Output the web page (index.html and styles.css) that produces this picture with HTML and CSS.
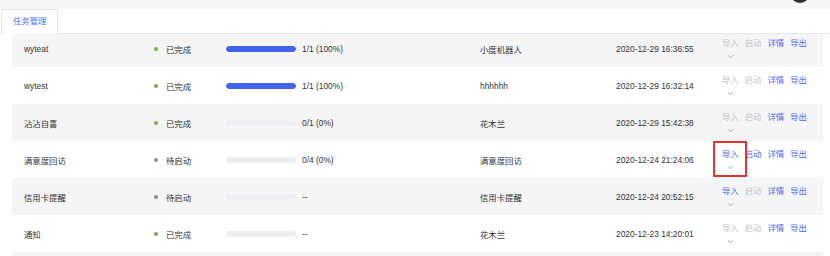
FILE: index.html
```html
<!DOCTYPE html>
<html lang="zh">
<head>
<meta charset="utf-8">
<link rel="stylesheet" href="styles.css">
</head>
<body>
<div class="topbar"><span class="avatar"></span></div>
<div class="page">
  <div class="tabs">
    <div class="tab">任务管理</div>
    <div class="tab-rest"></div>
  </div>
  <div class="scroll">
    <div class="table">
      <div class="row">
        <div class="c-name">wyteat</div>
        <div class="c-status"><span class="dot done"></span>已完成</div>
        <div class="c-bar"><div class="bar"><div class="fill" style="width:100%"></div></div></div>
        <div class="c-prog">1/1 (100%)</div>
        <div class="c-owner">小度机器人</div>
        <div class="c-date">2020-12-29 16:36:55</div>
        <div class="c-act"><div class="imp"><span class="off">导入</span><svg class="chev" viewBox="0 0 8 5"><path d="M1 1l3 3 3-3"/></svg></div><span class="off">启动</span><span class="on">详情</span><span class="on">导出</span></div>
      </div>
      <div class="row">
        <div class="c-name">wytest</div>
        <div class="c-status"><span class="dot done"></span>已完成</div>
        <div class="c-bar"><div class="bar"><div class="fill" style="width:100%"></div></div></div>
        <div class="c-prog">1/1 (100%)</div>
        <div class="c-owner">hhhhhh</div>
        <div class="c-date">2020-12-29 16:32:14</div>
        <div class="c-act"><div class="imp"><span class="off">导入</span><svg class="chev" viewBox="0 0 8 5"><path d="M1 1l3 3 3-3"/></svg></div><span class="off">启动</span><span class="on">详情</span><span class="on">导出</span></div>
      </div>
      <div class="row">
        <div class="c-name">沾沾自喜</div>
        <div class="c-status"><span class="dot done"></span>已完成</div>
        <div class="c-bar"><div class="bar"></div></div>
        <div class="c-prog">0/1 (0%)</div>
        <div class="c-owner">花木兰</div>
        <div class="c-date">2020-12-29 15:42:38</div>
        <div class="c-act"><div class="imp"><span class="off">导入</span><svg class="chev" viewBox="0 0 8 5"><path d="M1 1l3 3 3-3"/></svg></div><span class="off">启动</span><span class="on">详情</span><span class="on">导出</span></div>
      </div>
      <div class="row">
        <div class="c-name">满意度回访</div>
        <div class="c-status"><span class="dot wait"></span>待启动</div>
        <div class="c-bar"><div class="bar"></div></div>
        <div class="c-prog">0/4 (0%)</div>
        <div class="c-owner">满意度回访</div>
        <div class="c-date">2020-12-24 21:24:06</div>
        <div class="c-act"><div class="imp marked"><span class="on">导入</span><svg class="chev" viewBox="0 0 8 5"><path d="M1 1l3 3 3-3"/></svg></div><span class="on">启动</span><span class="on">详情</span><span class="on">导出</span></div>
      </div>
      <div class="row">
        <div class="c-name">信用卡提醒</div>
        <div class="c-status"><span class="dot wait"></span>待启动</div>
        <div class="c-bar"><div class="bar"></div></div>
        <div class="c-prog">--</div>
        <div class="c-owner">信用卡提醒</div>
        <div class="c-date">2020-12-24 20:52:15</div>
        <div class="c-act"><div class="imp"><span class="on">导入</span><svg class="chev" viewBox="0 0 8 5"><path d="M1 1l3 3 3-3"/></svg></div><span class="off">启动</span><span class="on">详情</span><span class="on">导出</span></div>
      </div>
      <div class="row">
        <div class="c-name">通知</div>
        <div class="c-status"><span class="dot done"></span>已完成</div>
        <div class="c-bar"><div class="bar"></div></div>
        <div class="c-prog">--</div>
        <div class="c-owner">花木兰</div>
        <div class="c-date">2020-12-23 14:20:01</div>
        <div class="c-act"><div class="imp"><span class="off">导入</span><svg class="chev" viewBox="0 0 8 5"><path d="M1 1l3 3 3-3"/></svg></div><span class="off">启动</span><span class="on">详情</span><span class="on">导出</span></div>
      </div>
      <div class="row"></div>
    </div>
  </div>
</div>
</body>
</html>
```

FILE: styles.css
```css
* { box-sizing: border-box; }
html, body { margin: 0; padding: 0; }
body {
  width: 830px;
  height: 256px;
  overflow: hidden;
  background: #fff;
  font-family: "Liberation Sans", "Noto Sans CJK SC", sans-serif;
  font-size: 8.4px;
  color: #333;
  position: relative;
}
.topbar {
  height: 9px;
  background: #f7f7f8;
  position: relative;
  overflow: hidden;
}
.avatar {
  position: absolute;
  left: 790px;
  top: -17px;
  width: 20px;
  height: 20px;
  border-radius: 50%;
  background: #2b2b2b;
}
.page { background: #fff; }
.tabs {
  display: flex;
  height: 25px;
}
.tab {
  margin-left: 1px;
  width: 57px;
  height: 25px;
  border: 1px solid #e2e3e6;
  border-bottom: none;
  border-radius: 3px 3px 0 0;
  color: #4a6cf5;
  font-size: 8.4px;
  padding-left: 11px;
  line-height: 23px;
}
.tab-rest {
  flex: 1;
  border-bottom: 1px solid #e6e7ea;
}
.scroll {
  height: 222px;
  overflow: hidden;
}
.table {
  margin: -4px 7px 0 12px;
}
.row {
  height: 37px;
  display: grid;
  grid-template-columns: 130px 72px 76px 178px 136px 106px 1fr;
  align-items: center;
  padding-left: 12px;
}
.row:nth-child(odd) { background: #f5f5f6; }
.c-status { display: flex; align-items: center; }
.dot {
  width: 4px;
  height: 4px;
  border-radius: 50%;
  margin-right: 8px;
}
.dot.done { background: #6db33f; }
.dot.wait { background: #8b8f98; }
.bar {
  width: 70px;
  height: 6px;
  border-radius: 3px;
  background: #edeef2;
  overflow: hidden;
}
.fill {
  height: 100%;
  background: #4264ec;
  border-radius: 3px;
}
.c-act {
  display: flex;
  align-items: flex-start;
  gap: 6px;
  line-height: 10px;
}
.imp {
  position: relative;
  display: flex;
  flex-direction: column;
  align-items: center;
}
.chev {
  width: 7px;
  height: 5px;
  margin-top: 6px;
  fill: none;
  stroke: #9a9ea6;
  stroke-width: 1;
}
.marked::after {
  content: "";
  position: absolute;
  left: -9px;
  top: -8px;
  width: 30px;
  height: 32px;
  border: 2px solid #e0332f;
}
.on { color: #4a6cf5; }
.off { color: #c2c5cc; }
```
